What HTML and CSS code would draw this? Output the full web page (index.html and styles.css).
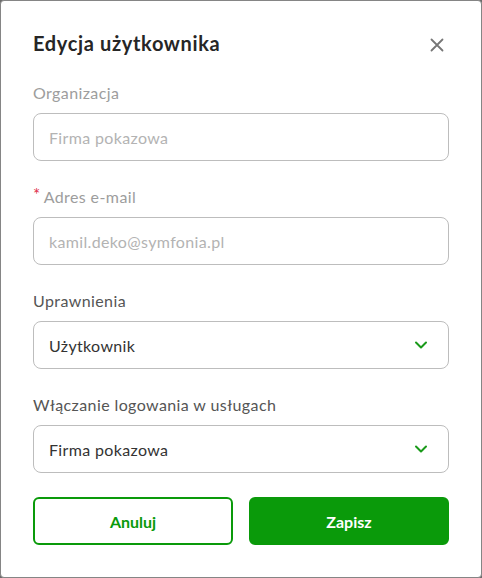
FILE: index.html
```html
<!DOCTYPE html>
<html lang="pl">
<head>
<meta charset="utf-8">
<title>Edycja użytkownika</title>
<link rel="stylesheet" href="styles.css">
</head>
<body>
<div class="modal">
  <div class="modal-header">
    <h1 class="modal-title">Edycja użytkownika</h1>
    <button class="close-btn" type="button" aria-label="Zamknij">
      <svg width="24" height="24" viewBox="0 0 24 24"><path d="M6.5 6.5 L17.5 17.5 M17.5 6.5 L6.5 17.5" stroke="#767676" stroke-width="1.8" stroke-linecap="round" fill="none"/></svg>
    </button>
  </div>
  <div class="form">
    <div class="field">
      <label class="label label-disabled">Organizacja</label>
      <div class="input input-disabled">Firma pokazowa</div>
    </div>
    <div class="field">
      <label class="label label-disabled"><span class="req">*</span>Adres e-mail</label>
      <div class="input input-disabled">kamil.deko@symfonia.pl</div>
    </div>
    <div class="field">
      <label class="label">Uprawnienia</label>
      <div class="input select">
        <span>Użytkownik</span>
        <svg class="chev" width="14" height="10" viewBox="0 0 14 10"><path d="M2 2.5 L7 7.5 L12 2.5" stroke="#1a9a1a" stroke-width="2" stroke-linecap="round" stroke-linejoin="round" fill="none"/></svg>
      </div>
    </div>
    <div class="field">
      <label class="label">Włączanie logowania w usługach</label>
      <div class="input select">
        <span>Firma pokazowa</span>
        <svg class="chev" width="14" height="10" viewBox="0 0 14 10"><path d="M2 2.5 L7 7.5 L12 2.5" stroke="#1a9a1a" stroke-width="2" stroke-linecap="round" stroke-linejoin="round" fill="none"/></svg>
      </div>
    </div>
  </div>
  <div class="actions">
    <button class="btn btn-outline" type="button">Anuluj</button>
    <button class="btn btn-primary" type="button">Zapisz</button>
  </div>
</div>
</body>
</html>
```

FILE: styles.css
```css
html {
  background: #6b6b6b;
}
body {
  margin: 0;
  font-family: "Lato", "Open Sans", sans-serif;
}
.modal {
  box-sizing: border-box;
  width: 482px;
  height: 578px;
  background: #fff;
  border: 1px solid #858585;
  border-radius: 4px;
  padding: 28px 32px 32px;
  display: flex;
  flex-direction: column;
}
.modal-header {
  display: flex;
  align-items: center;
  justify-content: space-between;
  height: 28px;
  margin-bottom: 24px;
}
.modal-title {
  margin: 0;
  font-size: 20px;
  font-weight: 700;
  color: #262626;
  letter-spacing: 0.65px;
}
.close-btn {
  width: 24px;
  height: 24px;
  padding: 0;
  margin-top: 4px;
  border: 0;
  background: none;
  display: flex;
}
.form {
  display: flex;
  flex-direction: column;
  gap: 24px;
}
.field {
  display: flex;
  flex-direction: column;
  gap: 8px;
}
.label {
  height: 24px;
  line-height: 24px;
  font-size: 16px;
  letter-spacing: 0.4px;
  color: #555;
  display: flex;
  align-items: center;
}
.label-disabled {
  color: #9d9d9d;
}
.req {
  color: #e0314b;
  font-size: 17px;
  margin-right: 3px;
  align-self: flex-start;
  line-height: 20px;
}
.input {
  box-sizing: border-box;
  height: 48px;
  border: 1px solid #bdbdbd;
  border-radius: 8px;
  padding: 0 15px;
  display: flex;
  align-items: center;
  font-size: 16px;
  letter-spacing: 0.35px;
  color: #333;
}
.input-disabled {
  color: #b3b3b3;
}
.select {
  justify-content: space-between;
  padding-right: 20px;
}
.chev {
  display: block;
}
.actions {
  margin-top: 24px;
  display: flex;
  gap: 16px;
}
.btn {
  flex: 1;
  height: 48px;
  border-radius: 6px;
  font-family: inherit;
  font-size: 16px;
  font-weight: 700;
  border: 2px solid #0a9a0a;
}
.btn-outline {
  background: #fff;
  color: #0a9a0a;
}
.btn-primary {
  background: #0a9a0a;
  color: #fff;
}
```
